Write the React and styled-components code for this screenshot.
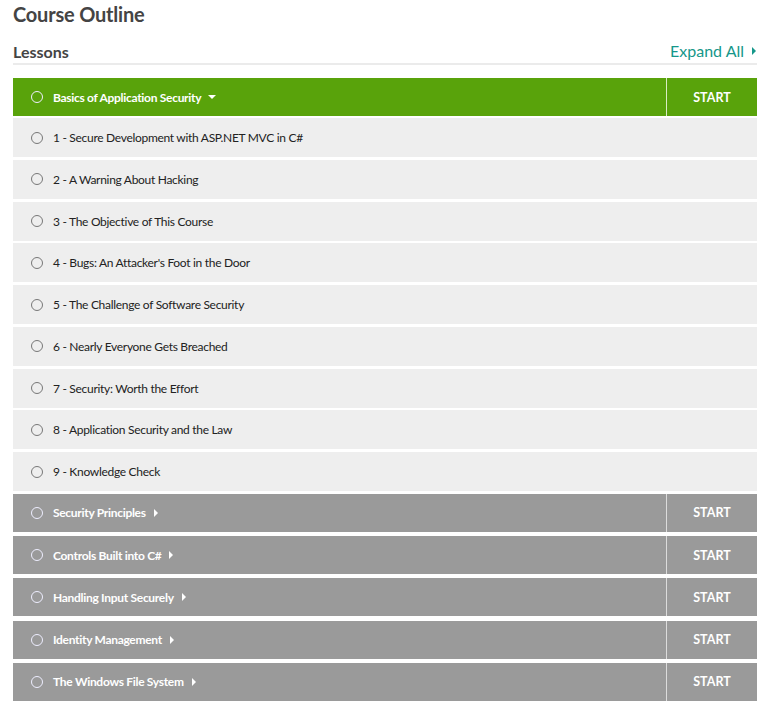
import React from 'react';
import styled, { createGlobalStyle } from 'styled-components';

const Global = createGlobalStyle`
  body {
    margin: 0;
    background: #fff;
    font-family: Lato, "Open Sans", sans-serif;
    color: #333;
  }
`;

const Page = styled.div`
  padding: 0 11px 0 13px;
`;

const Title = styled.h1`
  margin: 0;
  padding-top: 1px;
  font-size: 20px;
  font-weight: 700;
  color: #444;
  letter-spacing: -0.2px;
  height: 39px;
  line-height: 26px;
`;

const LessonsBar = styled.div`
  display: flex;
  justify-content: space-between;
  align-items: flex-end;
  border-bottom: 2px solid #ebebeb;
  padding-bottom: 1px;
  margin-bottom: 13px;
`;

const Lessons = styled.h2`
  margin: 0;
  font-size: 16px;
  font-weight: 700;
  color: #444;
  line-height: 20px;
`;

const Expand = styled.a`
  color: #16978a;
  font-size: 16px;
  line-height: 22px;
  display: flex;
  align-items: center;
  gap: 8px;
  margin-right: 1px;
`;

const RightTri = styled.span`
  width: 0;
  height: 0;
  border-left: 4px solid ${p => p.$color || '#16978a'};
  border-top: 4px solid transparent;
  border-bottom: 4px solid transparent;
  display: inline-block;
  margin-left: ${p => p.$ml || '0'};
`;

const DownTri = styled.span`
  width: 0;
  height: 0;
  border-top: 4px solid #fff;
  border-left: 4px solid transparent;
  border-right: 4px solid transparent;
  display: inline-block;
  margin-left: 7px;
`;

const Header = styled.div`
  display: flex;
  height: 38px;
  background: ${p => (p.$active ? '#59a30b' : '#9a9a9a')};
  color: #fff;
  margin-bottom: ${p => p.$gap};
`;

const HeaderMain = styled.div`
  flex: 1;
  display: flex;
  align-items: center;
  padding-left: 18px;
  font-size: 12px;
  letter-spacing: -0.3px;
  font-weight: 700;
`;

const StartCell = styled.div`
  width: 90px;
  border-left: 1px solid ${p => (p.$active ? '#d9ecc4' : '#dcdcdc')};
  display: flex;
  align-items: center;
  justify-content: center;
  font-size: 12.5px;
  font-weight: 700;
`;

const Radio = styled.span`
  width: 10px;
  height: 10px;
  border-radius: 50%;
  border: 1px solid ${p => (p.$light ? '#eef' : '#777')};
  margin-right: 10px;
  flex: none;
`;

const LessonRow = styled.div`
  height: 39px;
  background: #eeeeee;
  display: flex;
  align-items: center;
  padding-left: 18px;
  font-size: 12px;
  letter-spacing: -0.3px;
  color: #222;
  margin-bottom: 2.75px;
`;

const lessons = [
  '1 - Secure Development with ASP.NET MVC in C#',
  '2 - A Warning About Hacking',
  '3 - The Objective of This Course',
  "4 - Bugs: An Attacker's Foot in the Door",
  '5 - The Challenge of Software Security',
  '6 - Nearly Everyone Gets Breached',
  '7 - Security: Worth the Effort',
  '8 - Application Security and the Law',
  '9 - Knowledge Check',
];

const sections = [
  'Security Principles',
  'Controls Built into C#',
  'Handling Input Securely',
  'Identity Management',
  'The Windows File System',
];

export default function App() {
  return (
    <Page>
      <Global />
      <Title>Course Outline</Title>
      <LessonsBar>
        <Lessons>Lessons</Lessons>
        <Expand>Expand All <RightTri /></Expand>
      </LessonsBar>
      <Header $active $gap="2px">
        <HeaderMain>
          <Radio $light />
          Basics of Application Security
          <DownTri />
        </HeaderMain>
        <StartCell $active>START</StartCell>
      </Header>
      {lessons.map(l => (
        <LessonRow key={l}>
          <Radio />
          {l}
        </LessonRow>
      ))}
      {sections.map(s => (
        <Header key={s} $gap="4.3px">
          <HeaderMain>
            <Radio $light />
            {s}
            <RightTri $color="#fff" $ml="8px" />
          </HeaderMain>
          <StartCell>START</StartCell>
        </Header>
      ))}
    </Page>
  );
}
